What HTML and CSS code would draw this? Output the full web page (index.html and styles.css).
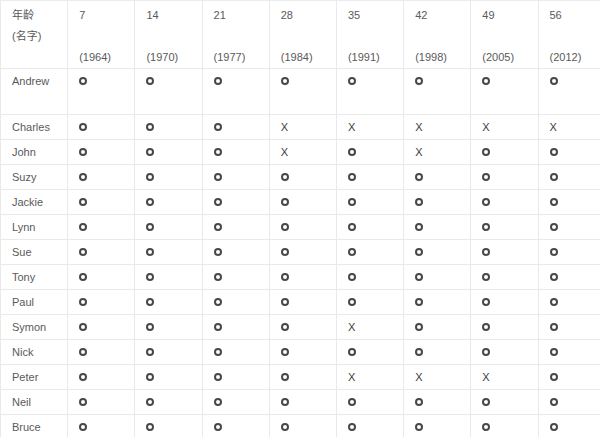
FILE: index.html
```html
<!DOCTYPE html>
<html>
<head>
<meta charset="utf-8">
<link rel="stylesheet" href="styles.css">
</head>
<body>
<table class="grid">
  <colgroup>
    <col class="c"><col class="c"><col class="c"><col class="c"><col class="c"><col class="c"><col class="c"><col class="c"><col class="c">
  </colgroup>
  <tr class="head">
    <td>年龄<br>(名字)</td>
    <td>7<br><br>(1964)</td>
    <td>14<br><br>(1970)</td>
    <td>21<br><br>(1977)</td>
    <td>28<br><br>(1984)</td>
    <td>35<br><br>(1991)</td>
    <td>42<br><br>(1998)</td>
    <td>49<br><br>(2005)</td>
    <td>56<br><br>(2012)</td>
  </tr>
  <tr class="tall">
    <td>Andrew</td>
    <td><span class="o"></span></td><td><span class="o"></span></td><td><span class="o"></span></td><td><span class="o"></span></td><td><span class="o"></span></td><td><span class="o"></span></td><td><span class="o"></span></td><td><span class="o"></span></td>
  </tr>
  <tr>
    <td>Charles</td>
    <td><span class="o"></span></td><td><span class="o"></span></td><td><span class="o"></span></td><td><span class="x">X</span></td><td><span class="x">X</span></td><td><span class="x">X</span></td><td><span class="x">X</span></td><td><span class="x">X</span></td>
  </tr>
  <tr>
    <td>John</td>
    <td><span class="o"></span></td><td><span class="o"></span></td><td><span class="o"></span></td><td><span class="x">X</span></td><td><span class="o"></span></td><td><span class="x">X</span></td><td><span class="o"></span></td><td><span class="o"></span></td>
  </tr>
  <tr>
    <td>Suzy</td>
    <td><span class="o"></span></td><td><span class="o"></span></td><td><span class="o"></span></td><td><span class="o"></span></td><td><span class="o"></span></td><td><span class="o"></span></td><td><span class="o"></span></td><td><span class="o"></span></td>
  </tr>
  <tr>
    <td>Jackie</td>
    <td><span class="o"></span></td><td><span class="o"></span></td><td><span class="o"></span></td><td><span class="o"></span></td><td><span class="o"></span></td><td><span class="o"></span></td><td><span class="o"></span></td><td><span class="o"></span></td>
  </tr>
  <tr>
    <td>Lynn</td>
    <td><span class="o"></span></td><td><span class="o"></span></td><td><span class="o"></span></td><td><span class="o"></span></td><td><span class="o"></span></td><td><span class="o"></span></td><td><span class="o"></span></td><td><span class="o"></span></td>
  </tr>
  <tr>
    <td>Sue</td>
    <td><span class="o"></span></td><td><span class="o"></span></td><td><span class="o"></span></td><td><span class="o"></span></td><td><span class="o"></span></td><td><span class="o"></span></td><td><span class="o"></span></td><td><span class="o"></span></td>
  </tr>
  <tr>
    <td>Tony</td>
    <td><span class="o"></span></td><td><span class="o"></span></td><td><span class="o"></span></td><td><span class="o"></span></td><td><span class="o"></span></td><td><span class="o"></span></td><td><span class="o"></span></td><td><span class="o"></span></td>
  </tr>
  <tr>
    <td>Paul</td>
    <td><span class="o"></span></td><td><span class="o"></span></td><td><span class="o"></span></td><td><span class="o"></span></td><td><span class="o"></span></td><td><span class="o"></span></td><td><span class="o"></span></td><td><span class="o"></span></td>
  </tr>
  <tr>
    <td>Symon</td>
    <td><span class="o"></span></td><td><span class="o"></span></td><td><span class="o"></span></td><td><span class="o"></span></td><td><span class="x">X</span></td><td><span class="o"></span></td><td><span class="o"></span></td><td><span class="o"></span></td>
  </tr>
  <tr>
    <td>Nick</td>
    <td><span class="o"></span></td><td><span class="o"></span></td><td><span class="o"></span></td><td><span class="o"></span></td><td><span class="o"></span></td><td><span class="o"></span></td><td><span class="o"></span></td><td><span class="o"></span></td>
  </tr>
  <tr>
    <td>Peter</td>
    <td><span class="o"></span></td><td><span class="o"></span></td><td><span class="o"></span></td><td><span class="o"></span></td><td><span class="x">X</span></td><td><span class="x">X</span></td><td><span class="x">X</span></td><td><span class="o"></span></td>
  </tr>
  <tr>
    <td>Neil</td>
    <td><span class="o"></span></td><td><span class="o"></span></td><td><span class="o"></span></td><td><span class="o"></span></td><td><span class="o"></span></td><td><span class="o"></span></td><td><span class="o"></span></td><td><span class="o"></span></td>
  </tr>
  <tr>
    <td>Bruce</td>
    <td><span class="o"></span></td><td><span class="o"></span></td><td><span class="o"></span></td><td><span class="o"></span></td><td><span class="o"></span></td><td><span class="o"></span></td><td><span class="o"></span></td><td><span class="o"></span></td>
  </tr>
</table>
</body>
</html>
```
FILE: styles.css
```css
html, body {
  margin: 0;
  padding: 0;
  background: #ffffff;
  overflow: hidden;
}
.grid {
  border-collapse: collapse;
  table-layout: fixed;
  width: 605px;
  font-family: "Liberation Sans", Arial, "Noto Sans CJK SC", sans-serif;
  font-size: 11px;
  color: #5a5a5a;
  line-height: 21px;
}
.grid .c {
  width: 67.2px;
}
.grid td {
  border: 1px solid #e9e9e9;
  padding: 2px 6px 1px 11px;
  vertical-align: top;
  white-space: nowrap;
  overflow: hidden;
}
.grid tr:first-child td {
  border-top: 1px solid #ececec;
}
.grid .head td {
  padding-top: 4px;
  padding-bottom: 0;
}
.grid .tall td {
  padding-bottom: 22px;
}
.o {
  display: inline-block;
  width: 8px;
  height: 8px;
  box-sizing: border-box;
  border: 2px solid #484848;
  border-radius: 50%;
  vertical-align: 0;
}
.x {
  color: #3c3c3c;
}
```
